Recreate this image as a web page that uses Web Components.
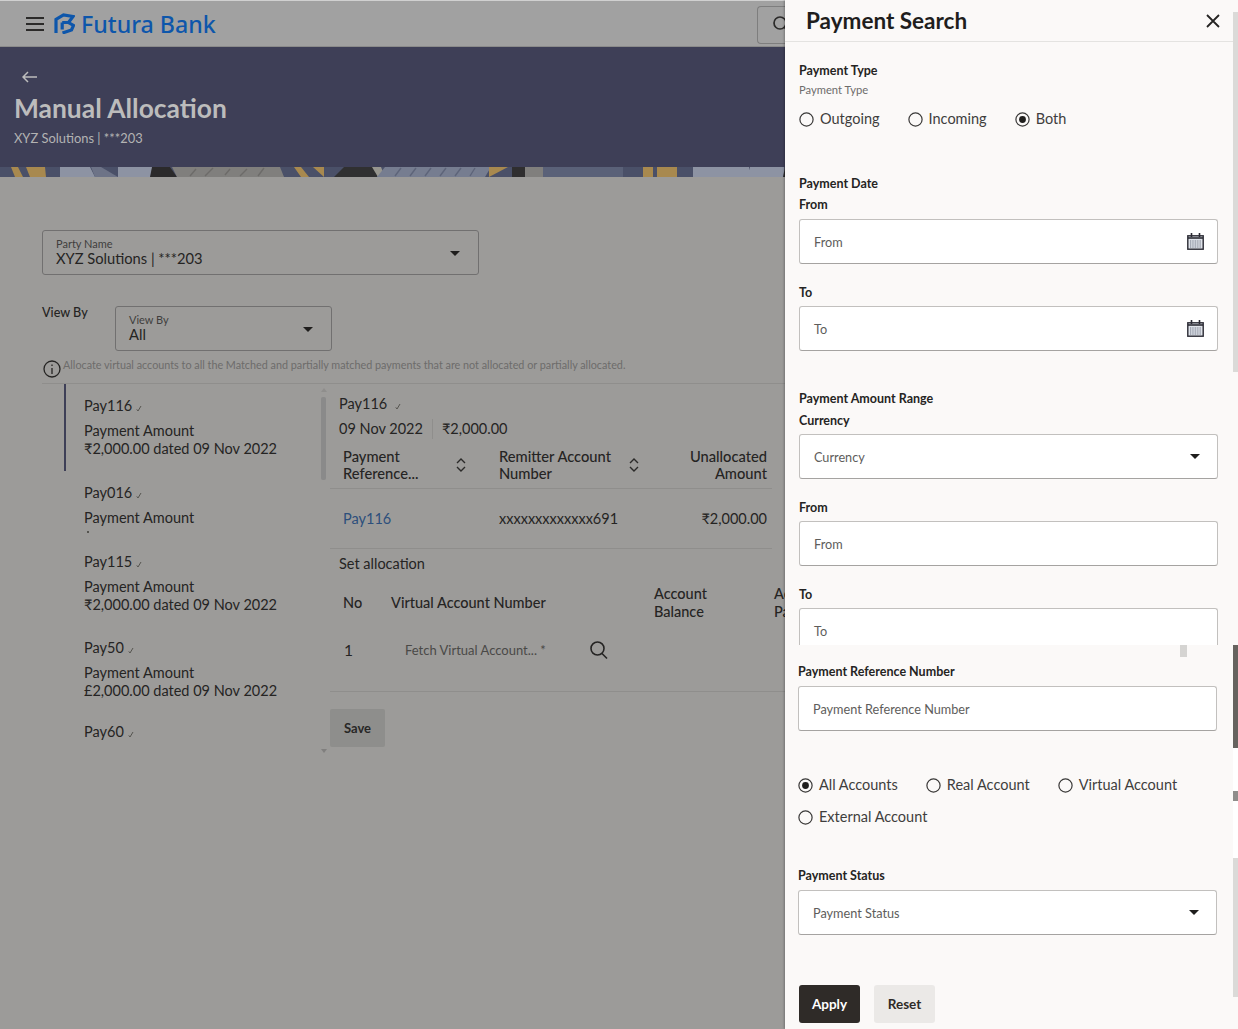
<!DOCTYPE html>
<html>
<head>
<meta charset="utf-8">
<title>Manual Allocation</title>
<style>
  html, body { margin: 0; height: 100%; overflow: hidden; background: #9c9b99; }
  body { font-family: "Lato", "Liberation Sans", sans-serif; color: #252423; }
</style>
</head>
<body>
<template id="sort-icon"><svg width="10" height="14" viewBox="0 0 10 14" fill="none" stroke="#2b2a29" stroke-width="1.4"><path d="M1 5l4-4 4 4M1 9l4 4 4-4"/></svg></template>
<template id="tick-icon"><svg class="tick" width="6" height="7" viewBox="0 0 6 7" fill="none" stroke="#55544f" stroke-width="1"><path d="M.8 4.4l1.2 1.6 3-5"/></svg></template>

<bank-shell>
  <bank-page slot="page">
    <top-bar></top-bar>
    <page-banner heading="Manual Allocation" sub="XYZ Solutions | ***203"></page-banner>
    <allocation-view></allocation-view>
  </bank-page>
  <search-panel slot="panel"></search-panel>
</bank-shell>

<script>
// small helper: attach open shadow root with given html
const mount = (el, html) => {
  const template = document.createElement("template");
  template.innerHTML = html;
  el.attachShadow({ mode: "open" }).appendChild(template.content.cloneNode(true));
};
const tick = () => document.getElementById("tick-icon").innerHTML;

class bankShell extends HTMLElement {
  connectedCallback() {
    mount(this, /* html */ `
      <style>
        :host { display: grid; grid-template-columns: 785px 453px; width: 1238px; height: 1029px; overflow: hidden; }
      </style>
      <slot name="page"></slot>
      <slot name="panel"></slot>`);
  }
}

class bankPage extends HTMLElement {
  connectedCallback() {
    mount(this, /* html */ `
      <style>
        :host { display: block; height: 1029px; overflow: hidden; background: #9c9b99; }
      </style>
      <slot></slot>`);
  }
}

class topBar extends HTMLElement {
  connectedCallback() {
    mount(this, /* html */ `
      <style>
        :host { display: flex; align-items: center; height: 47px; box-sizing: border-box; padding: 0 0 0 26px; background: #a1a1a1; border-top: 1px solid #d0d0d0; border-bottom: 1px solid #8b8b8b; }
        .brand { font: 500 23.2px "Noto Sans", sans-serif; color: #0d56ab; margin-left: 6px; }
        .logo { margin-left: 10px; }
        .search { margin-left: auto; width: 28px; height: 38px; box-sizing: border-box; border: 1px solid #7e7e7e; border-right: 0; border-radius: 4px 0 0 4px; padding: 8px 0 0 14px; margin-top: 2px; overflow: hidden; }
      </style>
      <svg width="18" height="14" viewBox="0 0 18 14" stroke="#2b2a29" stroke-width="2"><path d="M0 1h18M0 7h18M0 13h18"/></svg>
      <svg class="logo" width="21" height="21" viewBox="0 0 21 21" fill="none" stroke="#0d56ab" stroke-width="3.2"><path d="M2 20V6.5L9.5 2l9.5 1.5-4.5 6 5 3-2 4.5-9 3"/><path d="M8.2 9.5h6M8.2 9.5v7"/></svg>
      <span class="brand">Futura Bank</span>
      <div class="search"><svg width="20" height="20" viewBox="0 0 20 20" fill="none" stroke="#2b2a29" stroke-width="1.7"><circle cx="8" cy="8" r="6"/><path d="M12.5 12.5l4 4"/></svg></div>`);
  }
}

class pageBanner extends HTMLElement {
  connectedCallback() {
    mount(this, /* html */ `
      <style>
        :host { display: flex; flex-direction: column; height: 130px; background: #3e3f57; }
        .body { flex: 1; padding: 24px 14px 0; }
        h1 { margin: 8px 0 0; font: 700 26.4px/34px "Lato", sans-serif; color: #bcbcbc; }
        p { margin: 4px 0 0; font: 12.9px/18px "Lato", sans-serif; color: #b3b3b3; }
        svg.back { display: block; margin-left: 8px; }
        svg.strip { display: block; height: 10px; width: 785px; flex: none; }
      </style>
      <div class="body">
        <svg class="back" width="15" height="12" viewBox="0 0 15 12" fill="none" stroke="#bdbdbd" stroke-width="1.5"><path d="M15 6H1M6 1L1 6l5 5"/></svg>
        <h1>${this.getAttribute("heading")}</h1>
        <p>${this.getAttribute("sub")}</p>
      </div>
      <svg class="strip" viewBox="0 0 785 10" preserveAspectRatio="none">
        <rect width="785" height="10" fill="#4a5068"/>
        <path d="M11 0h7l5 10h-8zM26 0h19l1 10H30z" fill="#a8894f"/>
        <path d="M60 0h30l5 10H60zM118 0h34l1 10h-35z" fill="#8d93a3"/>
        <path d="M91 0h10l17 10H95z" fill="#6d7387"/>
        <path d="M152 0h18l7 10h-27z" fill="#2b2a2b"/>
        <path d="M172 0h108l4 10H177z" fill="#807f7d"/>
        <path d="M190 9l6-7M205 9l8-8M225 8l5-6M240 9l7-7M258 9l6-8" stroke="#6c6b69" stroke-width="1.4" fill="none"/>
        <path d="M294 0h7l8 10h-8zM313 0h11v10z" fill="#a8894f"/>
        <path d="M344 0h33v10h-43z" fill="#303031"/>
        <path d="M372 0h9l4 10h-7z" fill="#97968f"/>
        <path d="M385 0h106l-6 10H377z" fill="#767d90"/>
        <path d="M395 9l6-8M410 9l6-8M425 9l6-8M440 9l6-8M455 9l6-8M470 9l5-8" stroke="#5d6479" stroke-width="1.4" fill="none"/>
        <path d="M489 0h19l-19 10z" fill="#a8894f"/>
        <path d="M512 0h13v10h-13z" fill="#2f2e2f"/>
        <path d="M525 0h18v10h-18z" fill="#807f7d"/>
        <path d="M543 0h80v10h-80z" fill="#5a6178"/>
        <path d="M643 0h10v10h-10zM657 0h20v10h-20z" fill="#a8894f"/>
        <path d="M693 0h56l3 10h-59zM750 0h34l2 10h-36z" fill="#8d93a3"/>
        <path d="M785 0v10h-2z" fill="#2b2a2b"/>
      </svg>`);
  }
}

class fieldBox extends HTMLElement {
  connectedCallback() {
    mount(this, /* html */ `
      <style>
        :host { display: block; position: relative; box-sizing: border-box; height: 45px; border: 1px solid #717070; border-radius: 3px; padding: 6px 13px 0; }
        .label { font-size: 11px; line-height: 13px; color: #3f3e3d; }
        .value { font-size: 14.7px; line-height: 16px; color: #252423; }
        i { position: absolute; right: 18px; top: 20px; border: 5px solid transparent; border-top: 5px solid #1f1e1d; border-bottom: 0; }
      </style>
      <div class="label">${this.getAttribute("label")}</div>
      <div class="value">${this.getAttribute("value")}</div>
      <i></i>`);
  }
}

class payItem extends HTMLElement {
  connectedCallback() {
    const amount = this.getAttribute("amount");
    const heading = this.hasAttribute("short") ? "" : `<div class="row">Payment Amount</div>`;
    mount(this, /* html */ `
      <style>
        :host { display: block; height: var(--h, 87px); box-sizing: border-box; padding: 12px 0 0 20px; color: #252423; }
        :host([active]) { border-left: 2px solid #3e3f57; padding-left: 18px; }
        .id { display: flex; align-items: center; gap: 4px; font-size: 14.5px; line-height: 20px; height: 20px; margin-bottom: 6px; }
        .tick { margin-top: 5px; }
        .row { font-size: 14.5px; line-height: 18px; height: 18px; white-space: nowrap; }
        .dot { width: 2px; height: 2px; margin: 4px 0 0 3px; background: #55544f; }
      </style>
      <div class="id">${this.getAttribute("pay")}${tick()}</div>
      ${heading}
      ${amount ? `<div class="row">${amount} dated 09 Nov 2022</div>` : ""}
      ${this.hasAttribute("dot") ? `<div class="dot"></div>` : ""}`);
  }
}

class allocationView extends HTMLElement {
  connectedCallback() {
    const sort = document.getElementById("sort-icon").innerHTML;
    mount(this, /* html */ `
      <style>
        :host { display: block; padding: 53px 0 0 42px; font-size: 14.5px; color: #252423; }
        field-box.party { width: 437px; }
        .view { display: flex; margin-top: 31px; }
        .view > span { width: 73px; font-size: 12.6px; font-weight: 500; line-height: 14px; }
        field-box.by { width: 217px; }
        .note { display: flex; align-items: flex-start; height: 27px; margin-top: 5px; font-size: 10.8px; line-height: 17px; color: #6d6c6b; white-space: nowrap; }
        .note svg { margin: 3px 1px 0 0; flex: none; }
        .split { display: grid; grid-template-columns: 288px 1fr; border-top: 1px solid #8f8e8c; height: 372px; }
        .list { position: relative; }
        .list pay-item { margin-left: 22px; }
        .bar { position: absolute; left: 279px; top: 13px; width: 5px; height: 83px; background: #8a8a8a; border-radius: 2px; }
        .up, .down { position: absolute; left: 279px; border: 3px solid transparent; }
        .up { top: 4px; border-bottom: 4px solid #8f8e8c; border-top: 0; }
        .down { top: 365px; border-top: 4px solid #807f7e; border-bottom: 0; }
        .detail { padding-top: 10px; overflow: hidden; height: 362px; }
        .head { display: flex; align-items: center; gap: 8px; height: 20px; padding-left: 9px; line-height: 20px; }
        .head .tick { margin-top: 4px; }
        .date { display: flex; align-items: center; height: 20px; padding-left: 9px; margin-top: 5px; line-height: 20px; }
        .date span + span { border-left: 1px solid #8f8e8c; margin-left: 9px; padding-left: 9px; }
        .grid { display: grid; grid-template-columns: 156px 168px 100px; align-items: center; padding-left: 13px; border-bottom: 1px solid #8f8e8c; line-height: 17px; width: 442px; box-sizing: border-box; font-weight: 500; }
        .cols { height: 46px; margin-top: 4px; padding-bottom: 2px; font-size: 14.7px; }
        .grid > div { display: flex; align-items: center; justify-content: space-between; }
        .grid .sorted { padding-right: 33px; }
        .grid .sorted:nth-child(2) { padding-right: 28px; }
        .grid .right { text-align: right; justify-content: flex-end; }
        .rows { height: 60px; font-weight: 400; }
        .rows a { color: #2c4f7c; }
        .set { padding: 5px 0 0 9px; line-height: 20px; height: 20px; }
        .alloc { display: grid; grid-template-columns: 48px 263px 120px 30px; padding: 0 0 0 13px; margin-top: 8px; line-height: 18px; align-items: center; font-weight: 500; height: 42px; }
        .alloc > div { white-space: nowrap; }
        .fetch { display: flex; align-items: center; height: 68px; box-sizing: border-box; padding: 0 0 16px 14px; border-bottom: 1px solid #8f8e8c; }
        .fetch b { font-weight: 400; width: 61px; font-size: 15.5px; }
        .fetch em { font-style: normal; font-size: 13px; color: #4a4947; width: 184px; white-space: nowrap; }
        .save { display: flex; align-items: center; justify-content: center; width: 55px; height: 38px; margin-top: 17px; background: #8e8e8c; border-radius: 2px; font-size: 13px; font-weight: 700; color: #282726; }
      </style>
      <field-box class="party" label="Party Name" value="XYZ Solutions | ***203"></field-box>
      <div class="view"><span>View By</span><field-box class="by" label="View By" value="All"></field-box></div>
      <div class="note">
        <svg width="20" height="20" viewBox="0 0 20 20" fill="none" stroke="#252423" stroke-width="1.3"><circle cx="10" cy="10" r="8"/><path d="M10 9v6M10 5.5v1.5"/></svg>
        <span>Allocate virtual accounts to all the Matched and partially matched payments that are not allocated or partially allocated.</span>
      </div>
      <div class="split">
        <div class="list">
          <pay-item active pay="Pay116" amount="&#8377;2,000.00"></pay-item>
          <pay-item pay="Pay016" dot style="--h:69px"></pay-item>
          <pay-item pay="Pay115" amount="&#8377;2,000.00" style="--h:86px"></pay-item>
          <pay-item pay="Pay50" amount="&#163;2,000.00" style="--h:84px"></pay-item>
          <pay-item pay="Pay60" short style="--h:30px"></pay-item>
          <i class="up"></i><div class="bar"></div><i class="down"></i>
        </div>
        <div class="detail">
          <div class="head">Pay116${tick()}</div>
          <div class="date"><span>09 Nov 2022</span><span>&#8377;2,000.00</span></div>
          <div class="grid cols">
            <div class="sorted"><span>Payment<br>Reference...</span>${sort}</div>
            <div class="sorted"><span>Remitter Account<br>Number</span>${sort}</div>
            <div class="right"><span>Unallocated<br>Amount</span></div>
          </div>
          <div class="grid rows">
            <div><a>Pay116</a></div>
            <div>xxxxxxxxxxxxx691</div>
            <div class="right">&#8377;2,000.00</div>
          </div>
          <div class="set">Set allocation</div>
          <div class="alloc"><div>No</div><div>Virtual Account Number</div><div>Account<br>Balance</div><div>Ac<br>Pa</div></div>
          <div class="fetch"><b>1</b><em>Fetch Virtual Account... *</em>
            <svg width="20" height="20" viewBox="0 0 20 20" fill="none" stroke="#252423" stroke-width="1.6"><circle cx="8.5" cy="8.5" r="6.5"/><path d="M13 13.5l5 5"/></svg>
          </div>
          <div class="save">Save</div>
        </div>
      </div>`);
  }
}

class sectionLabel extends HTMLElement {
  connectedCallback() {
    mount(this, /* html */ `
      <style>
        :host { display: block; font-size: 12.5px; font-weight: 700; line-height: 16px; color: #252423; }
      </style>
      <slot></slot>`);
  }
}

class radioOption extends HTMLElement {
  connectedCallback() {
    const on = this.hasAttribute("checked");
    mount(this, /* html */ `
      <style>
        :host { display: inline-flex; align-items: center; font-size: 14.5px; line-height: 20px; color: #3f3e3d; }
        svg { margin-right: 6px; flex: none; }
      </style>
      <svg width="15" height="15" viewBox="0 0 15 15" fill="none"><circle cx="7.5" cy="7.5" r="6.6" stroke="#3a3938" stroke-width="1.2"/>${on ? '<circle cx="7.5" cy="7.5" r="3.4" fill="#1f1e1d"/>' : ""}</svg>
      <slot></slot>`);
  }
}

class inputBox extends HTMLElement {
  connectedCallback() {
    const icon = this.getAttribute("icon");
    const icons = {
      calendar: `<svg width="17" height="17" viewBox="0 0 17 17" fill="none"><rect x=".8" y="2.8" width="15.4" height="13.4" fill="#dfe3ea" stroke="#2a2a33" stroke-width="1.4"/><path d="M1 5h15" stroke="#2a2a33" stroke-width="1.6"/><path d="M4.5 0v4M12.5 0v4" stroke="#2a2a33" stroke-width="1.6"/><path d="M3 8h11M3 10h11M3 12h11M3 14h11" stroke="#6b7080" stroke-width="1.1" stroke-dasharray="1 .7"/></svg>`,
      caret: `<i></i>`,
    };
    mount(this, /* html */ `
      <style>
        :host { display: flex; align-items: center; justify-content: space-between; box-sizing: border-box; height: 45px; margin-top: 6px; padding: 0 14px; background: #fff; border: 1px solid #c2c0be; border-bottom-color: #a5a3a1; border-radius: 3px; font-size: 12.7px; color: #5e5d5b; }
        svg { margin-right: -1px; }
        i { margin-right: 3px; border: 5px solid transparent; border-top: 5px solid #1f1e1d; border-bottom: 0; }
      </style>
      <span>${this.getAttribute("placeholder")}</span>
      ${icons[icon] || ""}`);
  }
}

class scrollRail extends HTMLElement {
  connectedCallback() {
    mount(this, /* html */ `
      <style>
        :host { display: flex; flex-direction: column; position: absolute; right: 0; top: 12px; width: 5px; height: 986px; }
        div { flex: none; }
      </style>
      <div style="height:360px;background:#dbdad8"></div>
      <div style="height:273px"></div>
      <div style="height:103px;background:#66635f"></div>
      <div style="height:43px;background:#fff"></div>
      <div style="height:10px;background:#8f8d8b"></div>
      <div style="height:57px;background:#fff"></div>
      <div style="height:139px;background:#dbdad8"></div>`);
  }
}

class searchPanel extends HTMLElement {
  connectedCallback() {
    mount(this, /* html */ `
      <style>
        :host { display: block; position: relative; height: 1029px; overflow: hidden; background: #fbf9f8; box-shadow: -1px 0 2px rgba(0,0,0,.25); }
        header { display: flex; align-items: center; justify-content: space-between; height: 42px; box-sizing: border-box; padding: 0 13px 0 21px; border-bottom: 1px solid #e4e3e1; margin-right: 5px; }
        h2 { margin: 0; font: 700 22.5px/30px "Lato", sans-serif; color: #1f1e1d; }
        .top { height: 603px; box-sizing: border-box; padding: 21px 20px 0 14px; overflow: hidden; }
        .small { font-size: 11.2px; line-height: 14px; margin-top: 4px; color: #6d6c6b; }
        .radios { display: flex; gap: 28px; margin-top: 12px; }
        .gap { margin-top: 47px; }
        .range { margin-top: 40px; }
        .pair { margin-top: 5px; }
        .pair.tight { margin: 6px 0 -1px; }
        .block { margin: 21px 0 -1px; }
        .low { height: 384px; box-sizing: border-box; padding: 19px 21px 0 13px; position: relative; }
        .low .radios { flex-wrap: wrap; gap: 12px 28px; margin-top: 44px; }
        .status { margin-top: 41px; }
        .actions { display: flex; gap: 14px; margin: 50px 0 0 1px; }
        .btn { display: flex; align-items: center; justify-content: center; width: 61px; height: 38px; border-radius: 3px; font-size: 13.5px; font-weight: 700; background: #2f2b28; color: #fff; }
        .btn.alt { background: #ebe9e7; color: #2f2b28; }
        .tick { position: absolute; left: 395px; top: 0; width: 7px; height: 12px; background: #d5d4d2; }
      </style>
      <header><h2>Payment Search</h2>
        <svg width="14" height="14" viewBox="0 0 14 14" stroke="#252423" stroke-width="1.8"><path d="M1 1l12 12M13 1L1 13"/></svg>
      </header>
      <scroll-rail></scroll-rail>
      <div class="top">
        <section-label>Payment Type</section-label>
        <div class="small">Payment Type</div>
        <div class="radios">
          <radio-option>Outgoing</radio-option>
          <radio-option>Incoming</radio-option>
          <radio-option checked>Both</radio-option>
        </div>
        <div class="gap"><section-label>Payment Date</section-label></div>
        <section-label class="pair">From</section-label>
        <input-box placeholder="From" icon="calendar"></input-box>
        <section-label class="block">To</section-label>
        <input-box placeholder="To" icon="calendar"></input-box>
        <div class="range"><section-label>Payment Amount Range</section-label></div>
        <section-label class="pair tight">Currency</section-label>
        <input-box placeholder="Currency" icon="caret"></input-box>
        <section-label class="block">From</section-label>
        <input-box placeholder="From"></input-box>
        <section-label class="block">To</section-label>
        <input-box placeholder="To"></input-box>
      </div>
      <div class="low">
        <div class="tick"></div>
        <section-label>Payment Reference Number</section-label>
        <input-box placeholder="Payment Reference Number"></input-box>
        <div class="radios">
          <radio-option checked>All Accounts</radio-option>
          <radio-option>Real Account</radio-option>
          <radio-option>Virtual Account</radio-option>
          <radio-option>External Account</radio-option>
        </div>
        <div class="status"><section-label>Payment Status</section-label>
        <input-box placeholder="Payment Status" icon="caret"></input-box></div>
        <div class="actions"><div class="btn">Apply</div><div class="btn alt">Reset</div></div>
      </div>`);
  }
}

customElements.define("bank-shell", bankShell);
customElements.define("bank-page", bankPage);
customElements.define("top-bar", topBar);
customElements.define("page-banner", pageBanner);
customElements.define("field-box", fieldBox);
customElements.define("pay-item", payItem);
customElements.define("allocation-view", allocationView);
customElements.define("section-label", sectionLabel);
customElements.define("radio-option", radioOption);
customElements.define("input-box", inputBox);
customElements.define("scroll-rail", scrollRail);
customElements.define("search-panel", searchPanel);
</script>
</body>
</html>
